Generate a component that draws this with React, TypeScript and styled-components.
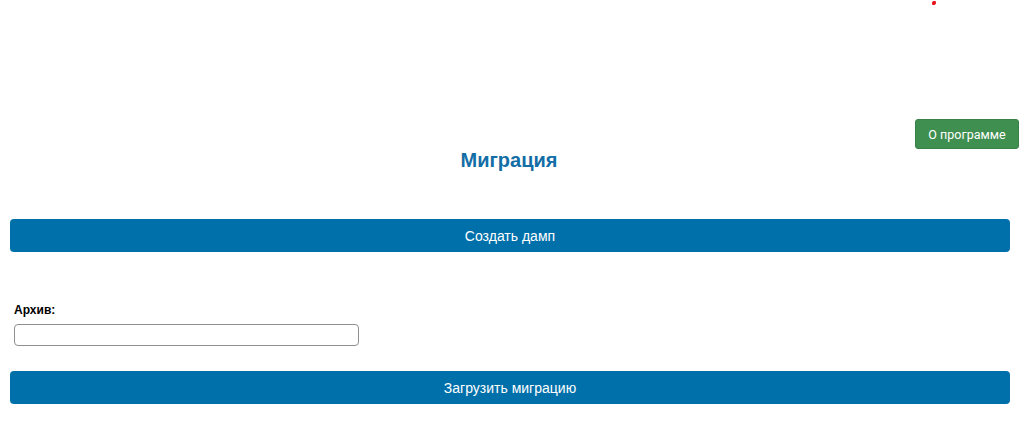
import React from "react";
import styled, { createGlobalStyle } from "styled-components";

const GlobalStyle = createGlobalStyle`
  html, body {
    margin: 0;
    padding: 0;
    background: #ffffff;
  }
  body {
    font-family: "Liberation Sans", Arial, sans-serif;
    color: #000000;
  }
`;

const Page = styled.div`
  display: flex;
  flex-direction: column;
  width: 1024px;
`;

const Header = styled.header`
  height: 119px;
  display: flex;
  align-items: flex-start;
`;

const Marker = styled.span`
  display: block;
  width: 4px;
  height: 4px;
  margin: 1px 0 0 932px;
  background: #e8141b;
  border-radius: 1px 2px 1px 2px;
  transform: skewX(-20deg);
`;

const AboutRow = styled.div`
  display: flex;
  justify-content: flex-end;
  padding-right: 5px;
`;

const AboutButton = styled.button`
  width: 104px;
  height: 30px;
  border: 1px solid #3a8049;
  border-radius: 3px;
  background: #3f8f51;
  color: #ffffff;
  font-family: Roboto, "Noto Sans", sans-serif;
  font-weight: 400;
  font-size: 12.5px;
  padding: 0;
  cursor: pointer;
`;

const Title = styled.h2`
  margin: 0;
  text-align: center;
  font-size: 20px;
  line-height: 22px;
  font-weight: bold;
  color: #136ea6;
  padding-right: 6px;
`;

const Content = styled.main`
  display: flex;
  flex-direction: column;
  padding: 0 14px 0 10px;
`;

const ActionBar = styled.button<{ $top: number }>`
  margin-top: ${(p) => p.$top}px;
  width: 100%;
  height: 33px;
  border: none;
  border-radius: 4px;
  background: #0070aa;
  color: #ffffff;
  font-family: "Liberation Sans", Arial, sans-serif;
  font-size: 14px;
  padding: 0;
  cursor: pointer;
`;

const Field = styled.div`
  display: flex;
  flex-direction: column;
  align-items: flex-start;
  gap: 7px;
  margin-top: 51px;
  padding-left: 4px;
`;

const Label = styled.label`
  font-size: 12px;
  line-height: 14px;
  font-weight: bold;
`;

const FileInput = styled.input`
  box-sizing: border-box;
  width: 345px;
  height: 22px;
  border: 1px solid #8f8f8f;
  border-radius: 4px;
  background: #ffffff;
  padding: 0 4px;
  font-size: 12px;
  outline: none;
`;

export default function App() {
  return (
    <Page>
      <GlobalStyle />
      <Header>
        <Marker />
      </Header>
      <AboutRow>
        <AboutButton>О программе</AboutButton>
      </AboutRow>
      <Title>Миграция</Title>
      <Content>
        <ActionBar $top={48}>Создать дамп</ActionBar>
        <Field>
          <Label htmlFor="archive">Архив:</Label>
          <FileInput id="archive" type="text" />
        </Field>
        <ActionBar $top={25}>Загрузить миграцию</ActionBar>
      </Content>
    </Page>
  );
}
